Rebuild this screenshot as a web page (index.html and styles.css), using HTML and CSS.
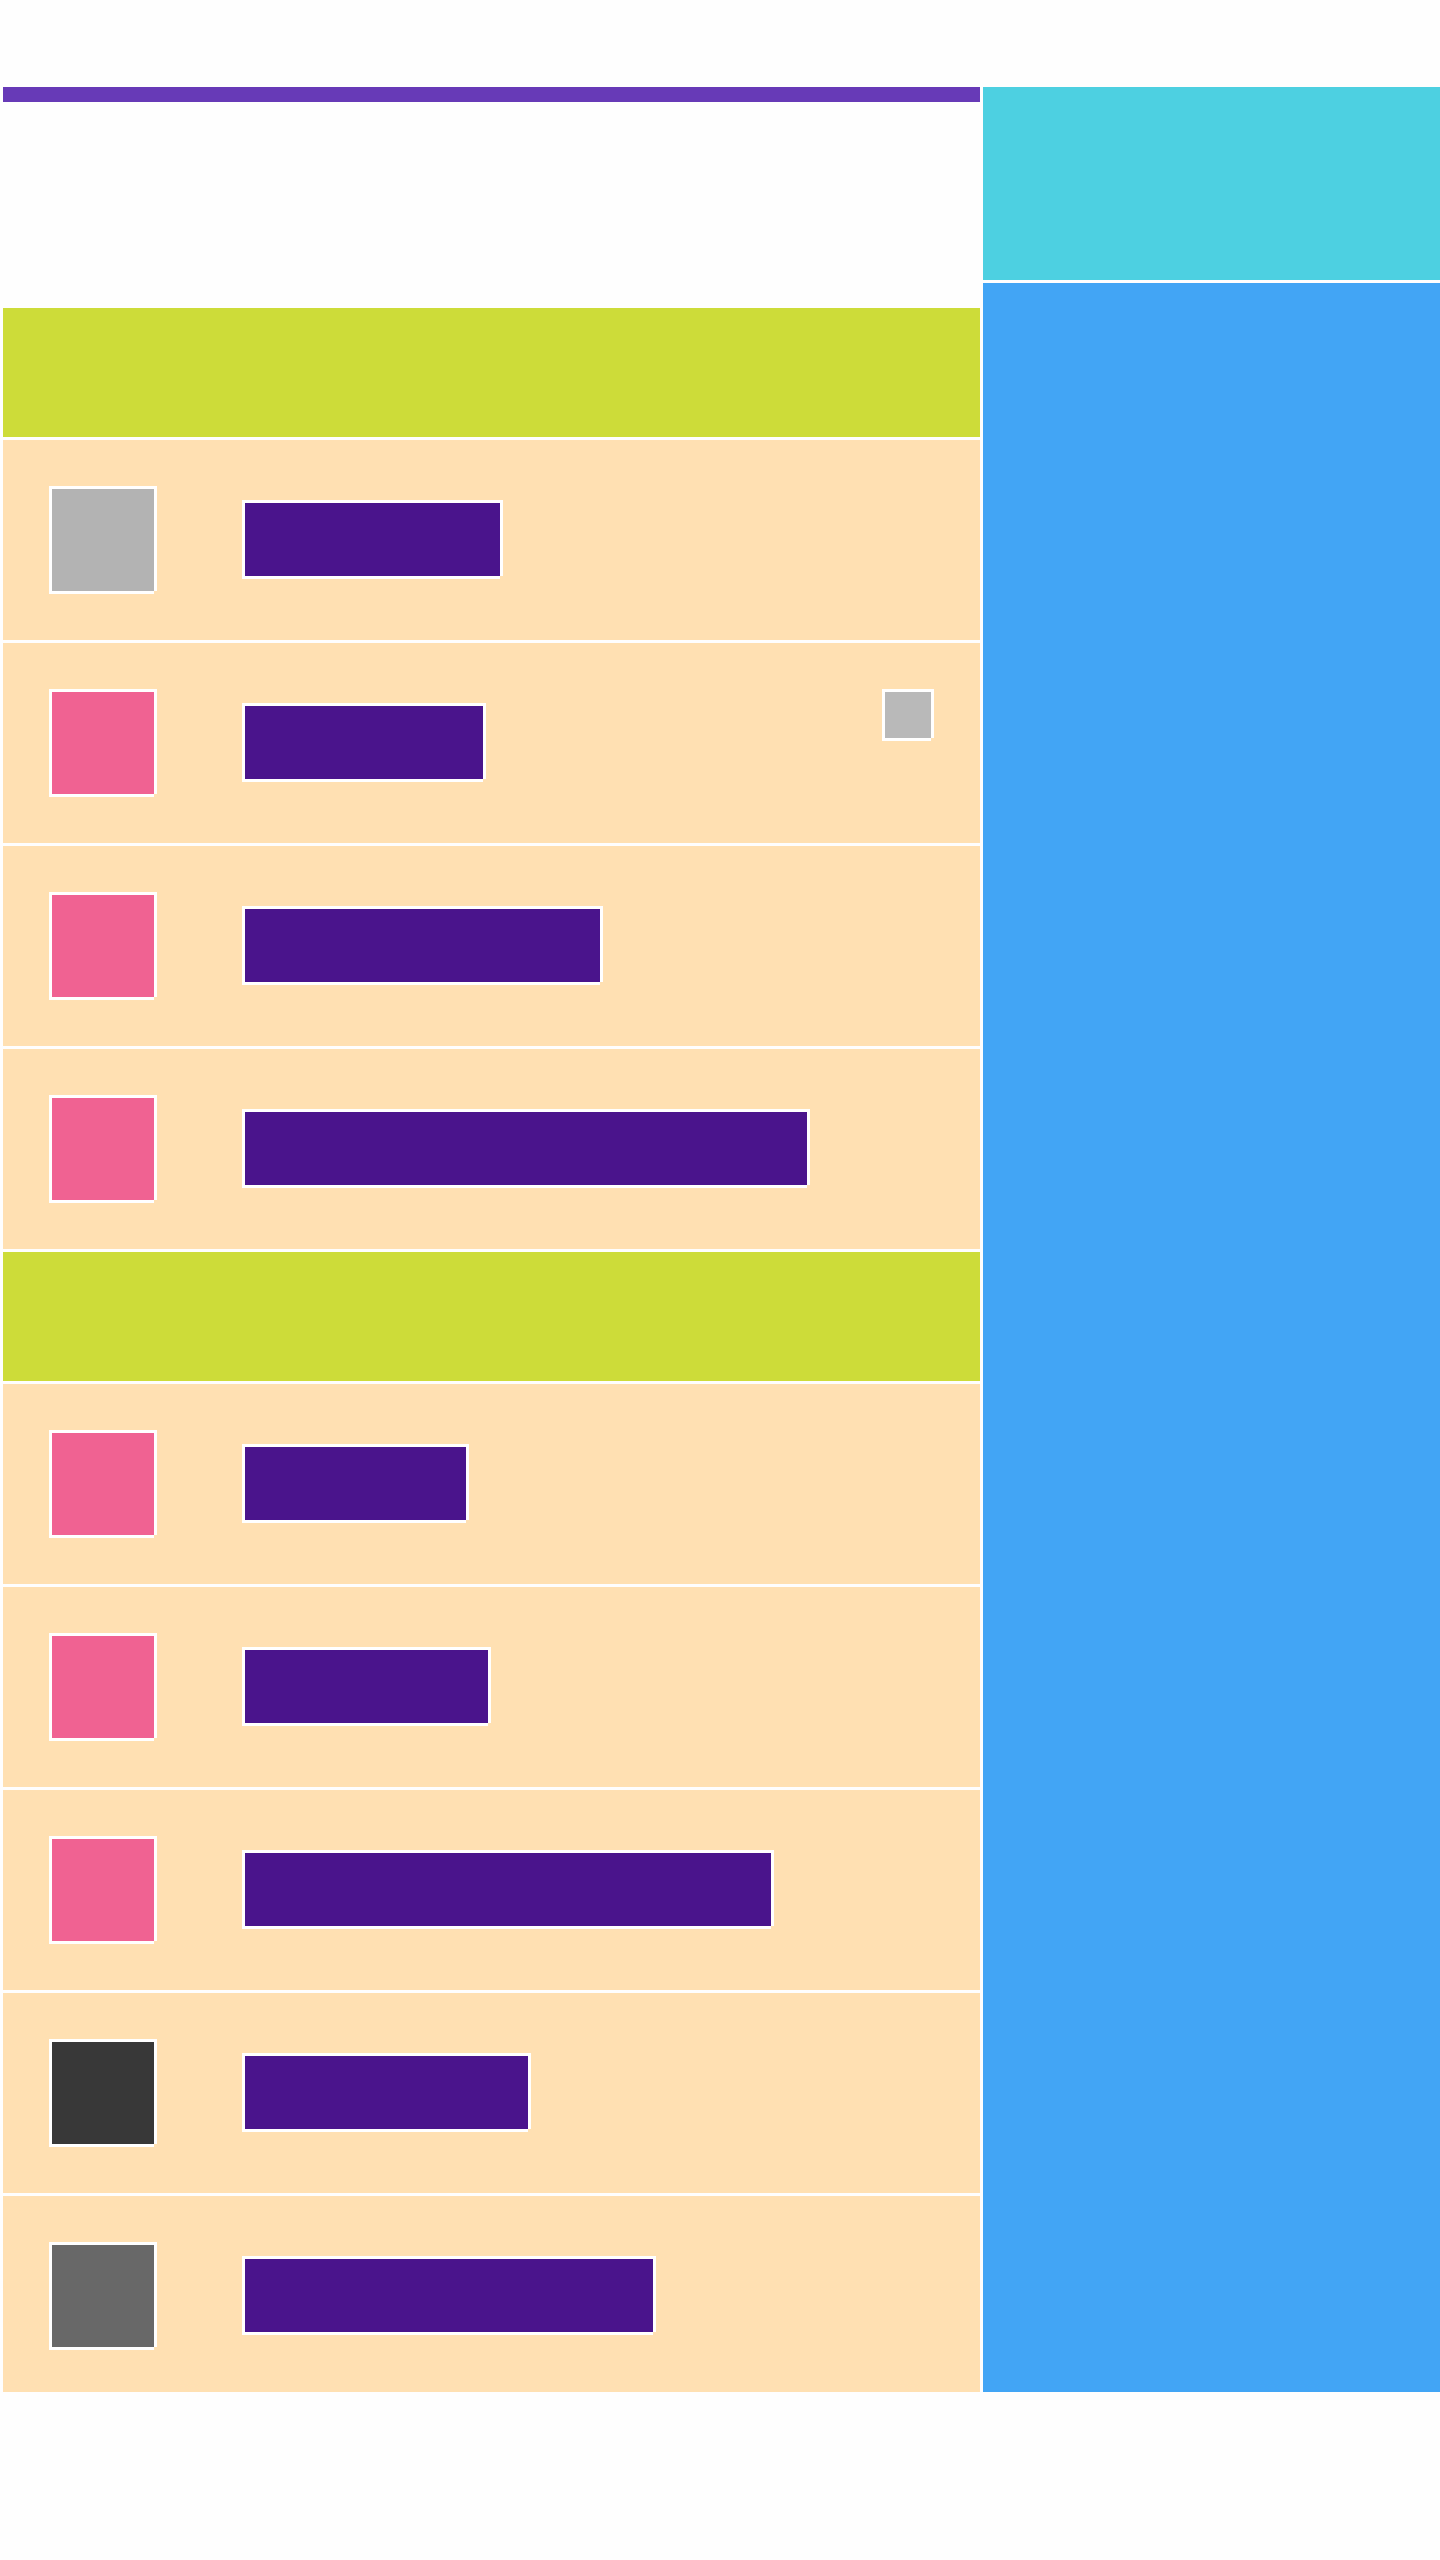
FILE: index.html
```html
<!DOCTYPE html>
<html lang="en">
<head>
<meta charset="utf-8">
<title>Layout</title>
<link rel="stylesheet" href="styles.css">
</head>
<body>
<div class="page">
  <main class="main">
    <div class="topbar"></div>
    <section class="group">
      <div class="group-head"></div>
      <div class="row"><div class="thumb thumb-gray"></div><div class="bar" style="width:258px"></div></div>
      <div class="row"><div class="thumb thumb-pink"></div><div class="bar" style="width:241px"></div><div class="badge"></div></div>
      <div class="row"><div class="thumb thumb-pink"></div><div class="bar" style="width:358px"></div></div>
      <div class="row"><div class="thumb thumb-pink"></div><div class="bar" style="width:565px"></div></div>
    </section>
    <section class="group">
      <div class="group-head"></div>
      <div class="row"><div class="thumb thumb-pink"></div><div class="bar" style="width:224px"></div></div>
      <div class="row"><div class="thumb thumb-pink"></div><div class="bar" style="width:246px"></div></div>
      <div class="row"><div class="thumb thumb-pink"></div><div class="bar" style="width:529px"></div></div>
      <div class="row"><div class="thumb thumb-dark"></div><div class="bar" style="width:286px"></div></div>
      <div class="row row-last"><div class="thumb thumb-mid"></div><div class="bar" style="width:411px"></div></div>
    </section>
  </main>
  <aside class="side">
    <div class="side-top"></div>
    <div class="side-body"></div>
  </aside>
</div>
</body>
</html>
```

FILE: styles.css
```css
html, body {
  margin: 0;
  padding: 0;
  background: #fefefe;
  font-family: "Liberation Sans", Arial, sans-serif;
}

.page {
  display: flex;
  gap: 3px;
  padding: 87px 0 0 3px;
  align-items: stretch;
}

.main {
  width: 977px;
  display: flex;
  flex-direction: column;
  gap: 3px;
}

.topbar {
  height: 15px;
  background: #673ab7;
  margin-bottom: 203px;
}

.group {
  display: flex;
  flex-direction: column;
  gap: 3px;
}

.group-head {
  height: 129px;
  background: #cddc39;
}

.row {
  height: 200px;
  box-sizing: border-box;
  background: #ffe0b2;
  display: flex;
  align-items: flex-start;
  padding: 46px 0 0 46px;
}

.row-last {
  height: 196px;
}

.thumb {
  flex: none;
  width: 102px;
  height: 102px;
  border-top: 3px solid #fff;
  border-left: 3px solid #fff;
  box-shadow: 3px 0 0 #fff, 0 3px 0 #fff;
}

.thumb-gray { background: #b3b3b3; }
.thumb-pink { background: #f06292; }
.thumb-dark { background: #383838; }
.thumb-mid { background: #686868; }

.bar {
  flex: none;
  box-sizing: border-box;
  height: 76px;
  margin: 14px 0 0 88px;
  background: #4a148c;
  border-top: 3px solid #fff;
  border-left: 3px solid #fff;
  box-shadow: 3px 0 0 #fff, 0 3px 0 #fff;
}

.badge {
  flex: none;
  width: 46px;
  height: 46px;
  margin: 0 49px 0 auto;
  background: #b9b9b9;
  border-top: 3px solid #fff;
  border-left: 3px solid #fff;
  box-shadow: 3px 0 0 #fff, 0 3px 0 #fff;
}

.side {
  flex: 1;
  display: flex;
  flex-direction: column;
  gap: 3px;
}

.side-top {
  height: 193px;
  background: #4dd0e1;
}

.side-body {
  flex: 1;
  background: #42a5f5;
}
```
